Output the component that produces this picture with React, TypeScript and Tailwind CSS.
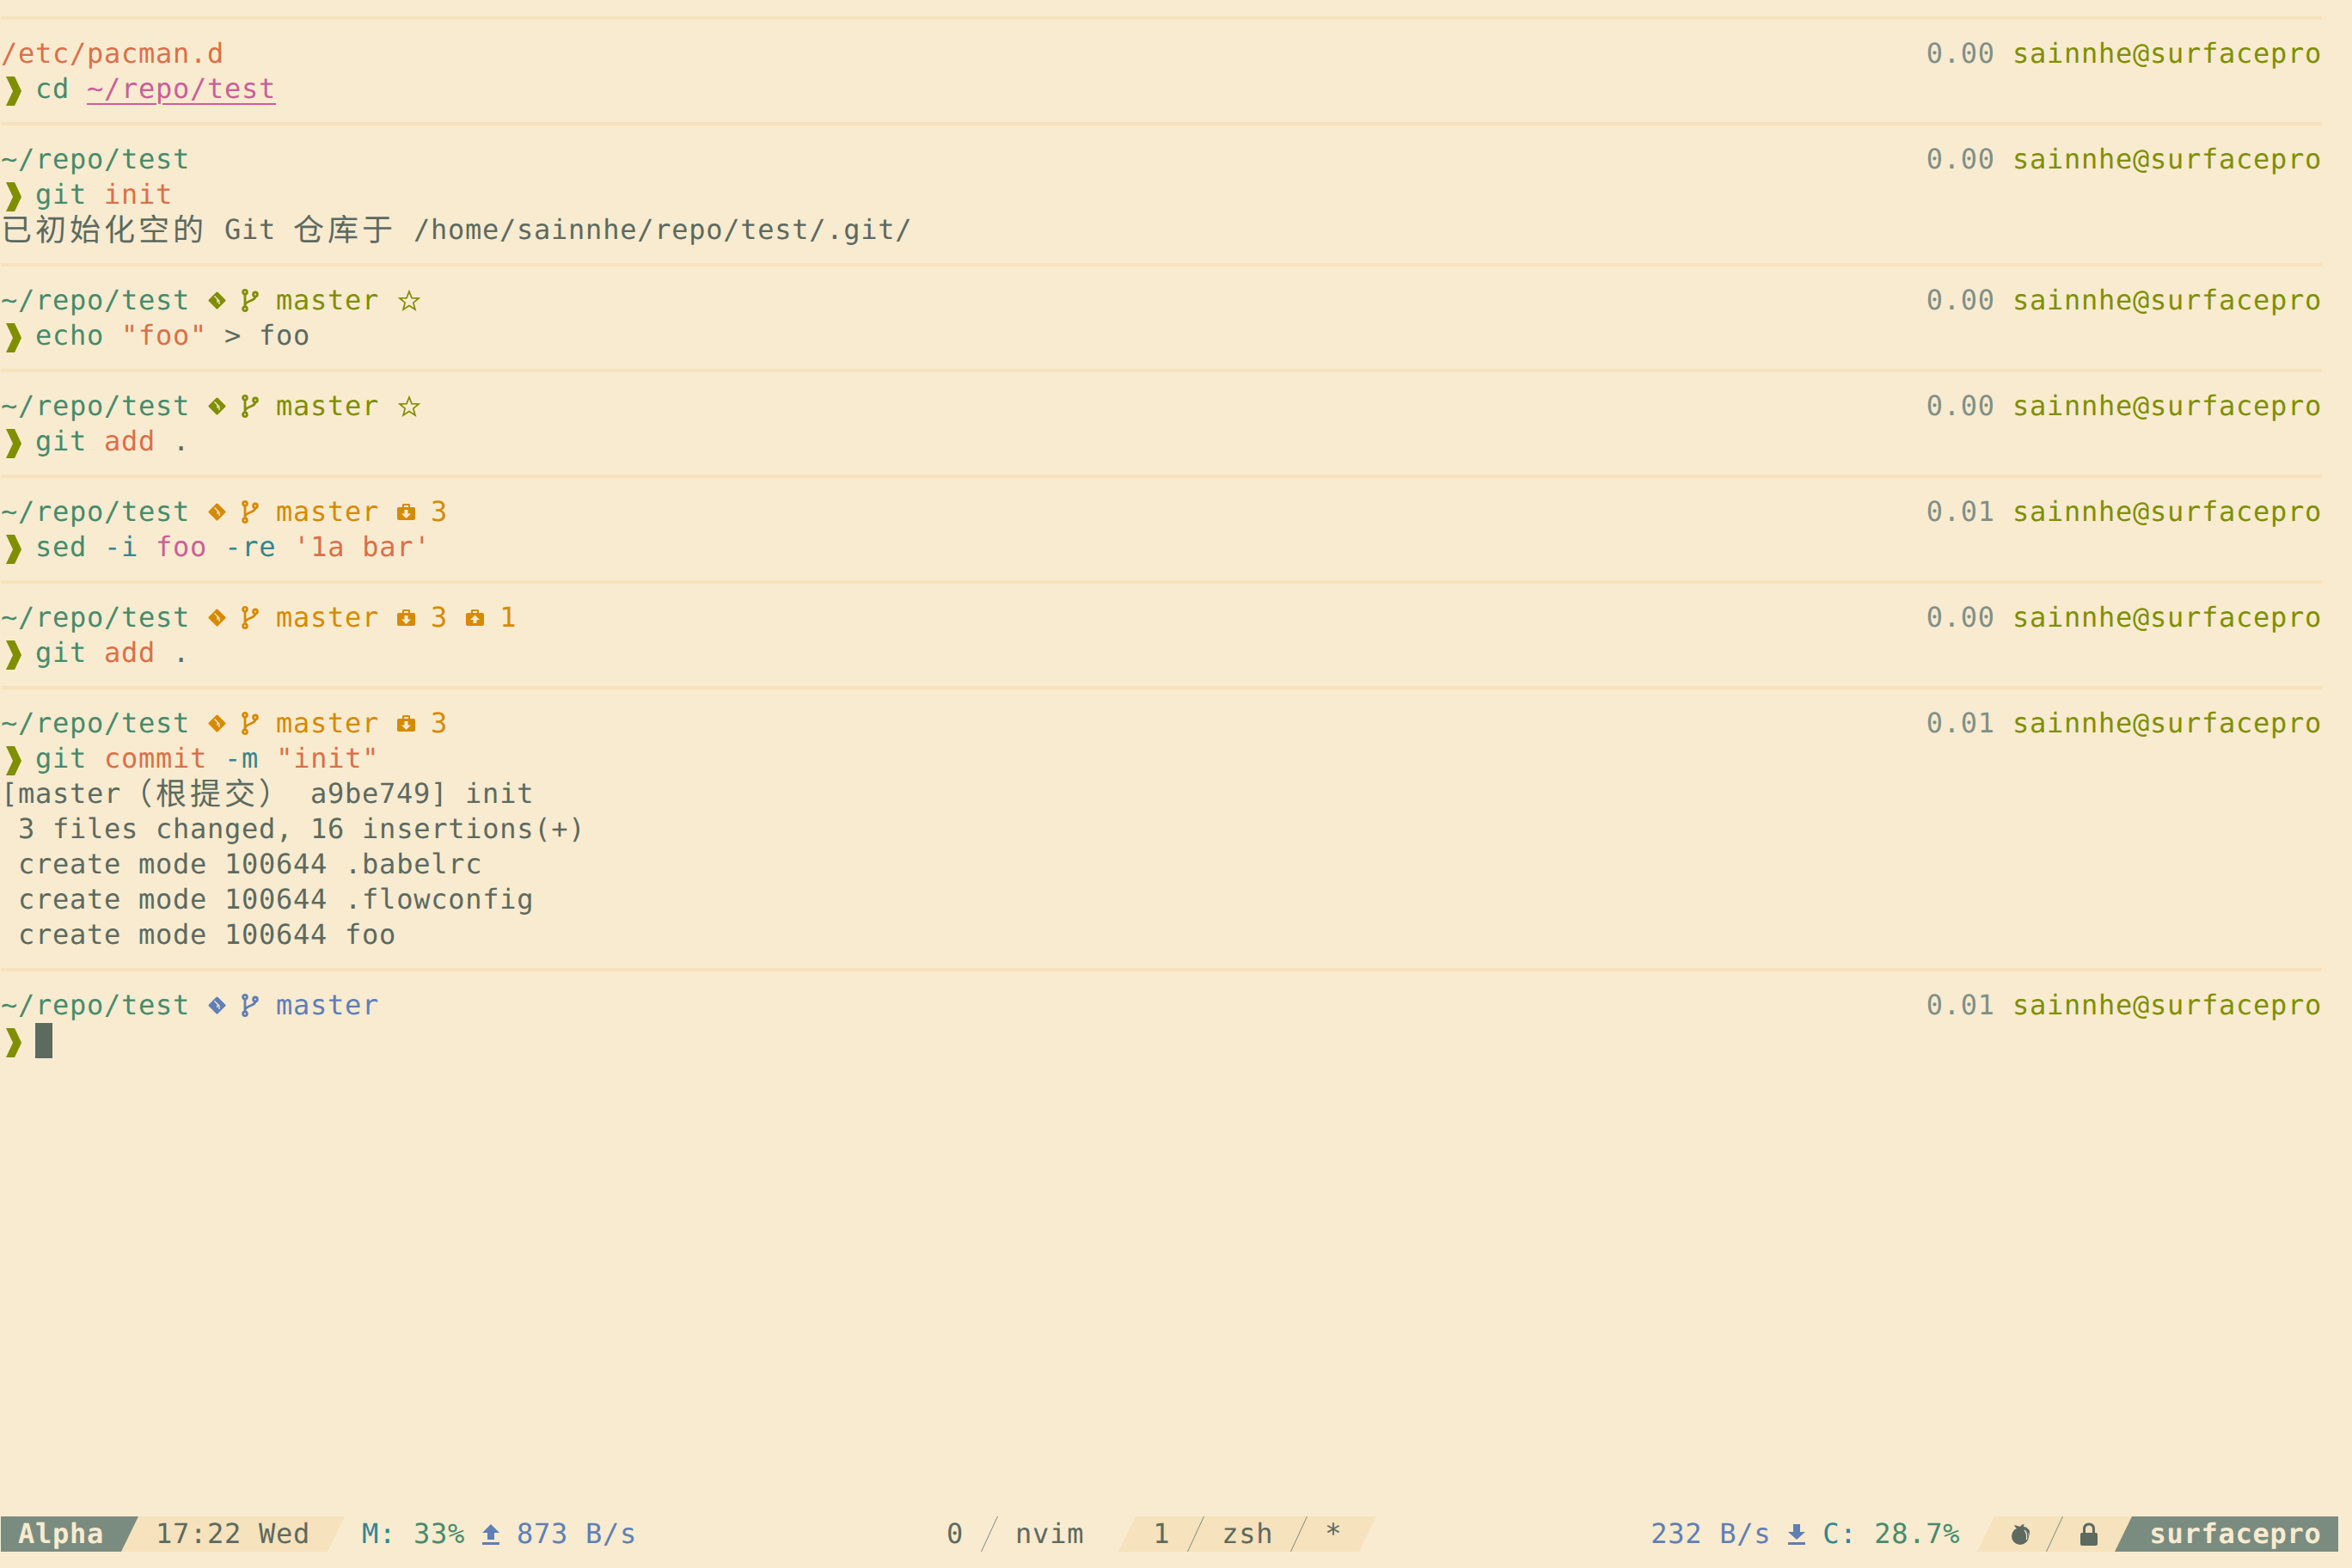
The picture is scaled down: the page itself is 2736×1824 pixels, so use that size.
import type { ReactNode } from "react";

const BG = "#f9ebd0";

type Mark = "clean" | "fresh" | "staged" | "mixed";

function Chevron() {
  return (
    <svg viewBox="0 0 18 34" className="ml-[6px] mr-[16px] mt-[5px] h-[34px] w-[18px] shrink-0 text-[#7f8f00]">
      <polygon points="0,0 10,0 18,17 10,34 0,34 8,17" fill="currentColor" />
    </svg>
  );
}

function GitDiamond() {
  return (
    <svg viewBox="0 0 21 21" className="h-[21px] w-[21px] shrink-0 overflow-visible">
      <rect x="3" y="3" width="15" height="15" rx="1.5" transform="rotate(45 10.5 10.5)" fill="currentColor" />
      <path d="M7.5 5.5 L13 11 V15 M11 9 L11 13" stroke={BG} strokeWidth="1.3" fill="none" />
    </svg>
  );
}

function GitBranchIcon() {
  return (
    <svg viewBox="0 0 20 27" className="h-[27px] w-[20px] shrink-0" fill="none" stroke="currentColor" strokeWidth="2.8">
      <circle cx="4" cy="3.8" r="2.4" />
      <circle cx="4" cy="23.2" r="2.4" />
      <circle cx="16" cy="6.4" r="2.4" />
      <path d="M4 6 V21 M16 8.8 C16 15 4 13 4 19.5" />
    </svg>
  );
}

function StarIcon() {
  return (
    <svg viewBox="0 0 26 25" className="h-[25px] w-[26px] shrink-0">
      <polygon
        points="13,2 16,9.6 24,10 17.8,15.2 20,23 13,18.6 6,23 8.2,15.2 2,10 10,9.6"
        fill="none"
        stroke="currentColor"
        strokeWidth="1.7"
      />
    </svg>
  );
}

function Briefcase({ up }: { up?: boolean }) {
  return (
    <svg viewBox="0 0 21 19" className="h-[19px] w-[21px] shrink-0">
      <path
        fillRule="evenodd"
        fill="currentColor"
        d="M6 4 V1.5 C6 .6 6.6 0 7.5 0 H13.5 C14.4 0 15 .6 15 1.5 V4 H19 C20.2 4 21 4.8 21 6 V17 C21 18.2 20.2 19 19 19 H2 C.8 19 0 18.2 0 17 V6 C0 4.8 .8 4 2 4 Z M8 4 H13 V2 H8 Z"
      />
      {up ? (
        <polygon points="10.5,6.5 16,12 12.5,12 12.5,16 8.5,16 8.5,12 5,12" fill={BG} />
      ) : (
        <polygon points="10.5,17 16,11.5 12.5,11.5 12.5,7 8.5,7 8.5,11.5 5,11.5" fill={BG} />
      )}
    </svg>
  );
}

function T({ c, children }: { c: string; children: ReactNode }) {
  return <span className={c}>{children}</span>;
}

function Cjk({ children }: { children: string }) {
  return (
    <span className="align-[-2px] font-['Noto_Sans_CJK_SC',sans-serif] text-[36px] leading-[0] tracking-[4px]">
      {children}
    </span>
  );
}

function Prompt({ path, load, mark }: { path: string; load: string; mark?: Mark }) {
  const tone =
    mark === "clean"
      ? "text-[#7f8f00]"
      : mark === "fresh"
        ? "text-[#5f7fb5]"
        : "text-[#d68a00]";
  return (
    <div className="flex h-[41px] items-center justify-between">
      <div className="flex items-center">
        <T c={path === "/etc/pacman.d" ? "text-[#da7049]" : "text-[#478b6b]"}>{path}</T>
        {mark && (
          <div className={`flex items-center ${tone}`}>
            <span className="ml-[21px] flex w-[20px] justify-start">
              <GitDiamond />
            </span>
            <span className="ml-[19px] flex w-[20px]">
              <GitBranchIcon />
            </span>
            <span className="ml-[20px]">master</span>
            {mark === "clean" && (
              <span className="ml-[22px] flex w-[18px]">
                <StarIcon />
              </span>
            )}
            {(mark === "staged" || mark === "mixed") && (
              <>
                <span className="ml-[21px] flex w-[19px]">
                  <Briefcase />
                </span>
                <span className="ml-[20px]">3</span>
              </>
            )}
            {mark === "mixed" && (
              <>
                <span className="ml-[21px] flex w-[19px]">
                  <Briefcase up />
                </span>
                <span className="ml-[20px]">1</span>
              </>
            )}
          </div>
        )}
      </div>
      <div>
        <T c="text-[#7f9088]">{load}</T> <T c="text-[#7f8f00]">sainnhe@surfacepro</T>
      </div>
    </div>
  );
}

function Command({ children }: { children?: ReactNode }) {
  return (
    <div className="flex h-[41px] items-center">
      <Chevron />
      <div className="whitespace-pre">{children}</div>
    </div>
  );
}

function Output({ children }: { children: ReactNode }) {
  return <div className="h-[41px] whitespace-pre leading-[41px] text-[#5c6a60]">{children}</div>;
}

function Block({ children }: { children: ReactNode }) {
  return <section className="border-t-4 border-[#f6e2bc] pb-[18px] pt-[19px]">{children}</section>;
}

const green = "text-[#478b6b]";
const orange = "text-[#da7049]";
const pink = "text-[#c9609a]";
const teal = "text-[#35858f]";
const fg = "text-[#5c6a60]";

function Slant({ from, to }: { from: string; to: string }) {
  // powerline style divider, one cell wide
  return (
    <svg viewBox="0 0 20 41" className="h-[41px] w-[20px] shrink-0">
      <rect width="20" height="41" fill={to} />
      <polygon points="0,0 20,0 0,41" fill={from} />
    </svg>
  );
}

function Tick() {
  return (
    <svg viewBox="0 0 20 41" className="h-[41px] w-[20px] shrink-0">
      <line x1="0.5" y1="41" x2="19.5" y2="0" stroke="#7a8c80" strokeWidth="1" />
    </svg>
  );
}

function ArrowIcon({ down }: { down?: boolean }) {
  return (
    <svg viewBox="0 0 20 24" className="h-[24px] w-[20px] shrink-0 text-[#5f7fb5]">
      <polygon
        points={down ? "10,18 20,9 14,9 14,0 6,0 6,9 0,9" : "10,0 20,10 14,10 14,18 6,18 6,10 0,10"}
        fill="currentColor"
      />
      <rect y="21" width="20" height="3" fill="currentColor" />
    </svg>
  );
}

function TomatoIcon() {
  return (
    <svg viewBox="0 0 22 24" className="h-[24px] w-[22px] shrink-0 text-[#5c6a60]">
      <circle cx="11" cy="14" r="10" fill="currentColor" />
      <path d="M9 6 C6 5 5 3 4 1 C7 2 9 2 11 3 C12 1 14 0 16 0 C15 1 15 2 15 3 C18 3 20 5 22 8 V14 C21 10 19 8 17 7 C14 6 12 6 9 6 Z" fill="currentColor" />
      <path d="M16 7 C18 9 19 13 18.5 18" stroke={BG} strokeWidth="1.2" fill="none" />
    </svg>
  );
}

function LockIcon() {
  return (
    <svg viewBox="0 0 22 27" className="h-[27px] w-[22px] shrink-0 text-[#5c6a60]">
      <path d="M5.5 13 V8 C5.5 4 7.5 2 11 2 C14.5 2 16.5 4 16.5 8 V13" fill="none" stroke="currentColor" strokeWidth="3" />
      <rect x="1" y="12" width="20" height="15" rx="2" fill="currentColor" />
    </svg>
  );
}

const TAN = "#f6e2bc";
const GREY = "#7a8c80";

function StatusBar() {
  return (
    <footer className="mb-[19px] mt-auto flex h-[41px] items-center whitespace-pre leading-[41px]">
      {/* left: session, clock, memory, upload */}
      <div className="flex w-[140px] bg-[#7a8c80] pl-[20px] font-bold text-[#f9ebd0]">Alpha</div>
      <Slant from={GREY} to={TAN} />
      <div className="flex w-[220px] bg-[#f6e2bc] pl-[20px] text-[#5c6a60]">17:22 Wed</div>
      <Slant from={TAN} to={BG} />
      <div className="ml-[20px] flex items-center">
        <T c={teal}>M:</T>
        <T c={green}> 33% </T>
        <ArrowIcon />
        <T c="text-[#5f7fb5]"> 873 B/s</T>
      </div>

      {/* windows */}
      <div className="ml-[360px] flex items-center text-[#5c6a60]">
        <span>0 </span>
        <Tick />
        <span> nvim  </span>
        <Slant from={BG} to={TAN} />
        <div className="flex items-center bg-[#f6e2bc]">
          <span> 1 </span>
          <Tick />
          <span> zsh </span>
          <Tick />
          <span> * </span>
        </div>
        <Slant from={TAN} to={BG} />
      </div>

      {/* right: download, cpu, icons, host */}
      <div className="ml-[319px] flex items-center">
        <T c="text-[#5f7fb5]">232 B/s </T>
        <ArrowIcon down />
        <T c={teal}> C:</T>
        <T c={green}> 28.7% </T>
        <Slant from={BG} to={TAN} />
        <div className="flex h-[41px] w-[60px] items-center justify-center bg-[#f6e2bc]">
          <TomatoIcon />
        </div>
        <div className="bg-[#f6e2bc]">
          <Tick />
        </div>
        <div className="flex h-[41px] w-[60px] items-center justify-center bg-[#f6e2bc]">
          <LockIcon />
        </div>
        <Slant from={TAN} to={GREY} />
        <div className="w-[240px] bg-[#7a8c80] pl-[20px] font-bold text-[#f9ebd0]">surfacepro</div>
      </div>
    </footer>
  );
}

export default function App() {
  return (
    <div className="flex h-[1824px] w-[2736px] flex-col overflow-hidden bg-[#f9ebd0] pl-px pt-[19px] font-['DejaVu_Sans_Mono',monospace] text-[32px] leading-[41px] tracking-[0.74px] [text-rendering:geometricPrecision]">
      <div className="w-[2700px]">
        <Block>
          <Prompt path="/etc/pacman.d" load="0.00" />
          <Command>
            <T c={green}>cd</T>{" "}
            <span className={`${pink} underline decoration-2 underline-offset-[6px]`}>~/repo/test</span>
          </Command>
        </Block>

        <Block>
          <Prompt path="~/repo/test" load="0.00" />
          <Command>
            <T c={green}>git</T> <T c={orange}>init</T>
          </Command>
          <Output>
            <Cjk>已初始化空的</Cjk> Git <Cjk>仓库于</Cjk> /home/sainnhe/repo/test/.git/
          </Output>
        </Block>

        <Block>
          <Prompt path="~/repo/test" load="0.00" mark="clean" />
          <Command>
            <T c={green}>echo</T> <T c={orange}>"foo"</T> <T c={fg}>&gt; foo</T>
          </Command>
        </Block>

        <Block>
          <Prompt path="~/repo/test" load="0.00" mark="clean" />
          <Command>
            <T c={green}>git</T> <T c={orange}>add</T> <T c={fg}>.</T>
          </Command>
        </Block>

        <Block>
          <Prompt path="~/repo/test" load="0.01" mark="staged" />
          <Command>
            <T c={green}>sed</T> <T c={teal}>-i</T> <T c={pink}>foo</T> <T c={teal}>-re</T>{" "}
            <T c={orange}>'1a bar'</T>
          </Command>
        </Block>

        <Block>
          <Prompt path="~/repo/test" load="0.00" mark="mixed" />
          <Command>
            <T c={green}>git</T> <T c={orange}>add</T> <T c={fg}>.</T>
          </Command>
        </Block>

        <Block>
          <Prompt path="~/repo/test" load="0.01" mark="staged" />
          <Command>
            <T c={green}>git</T> <T c={orange}>commit</T> <T c={teal}>-m</T> <T c={orange}>"init"</T>
          </Command>
          <Output>
            [master<Cjk>（根提交）</Cjk> a9be749] init
          </Output>
          <Output> 3 files changed, 16 insertions(+)</Output>
          <Output> create mode 100644 .babelrc</Output>
          <Output> create mode 100644 .flowconfig</Output>
          <Output> create mode 100644 foo</Output>
        </Block>

        <Block>
          <Prompt path="~/repo/test" load="0.01" mark="fresh" />
          <Command>
            <span className="inline-block h-[41px] w-[20px] bg-[#5c6a60] align-top" />
          </Command>
        </Block>
      </div>

      <StatusBar />
    </div>
  );
}
